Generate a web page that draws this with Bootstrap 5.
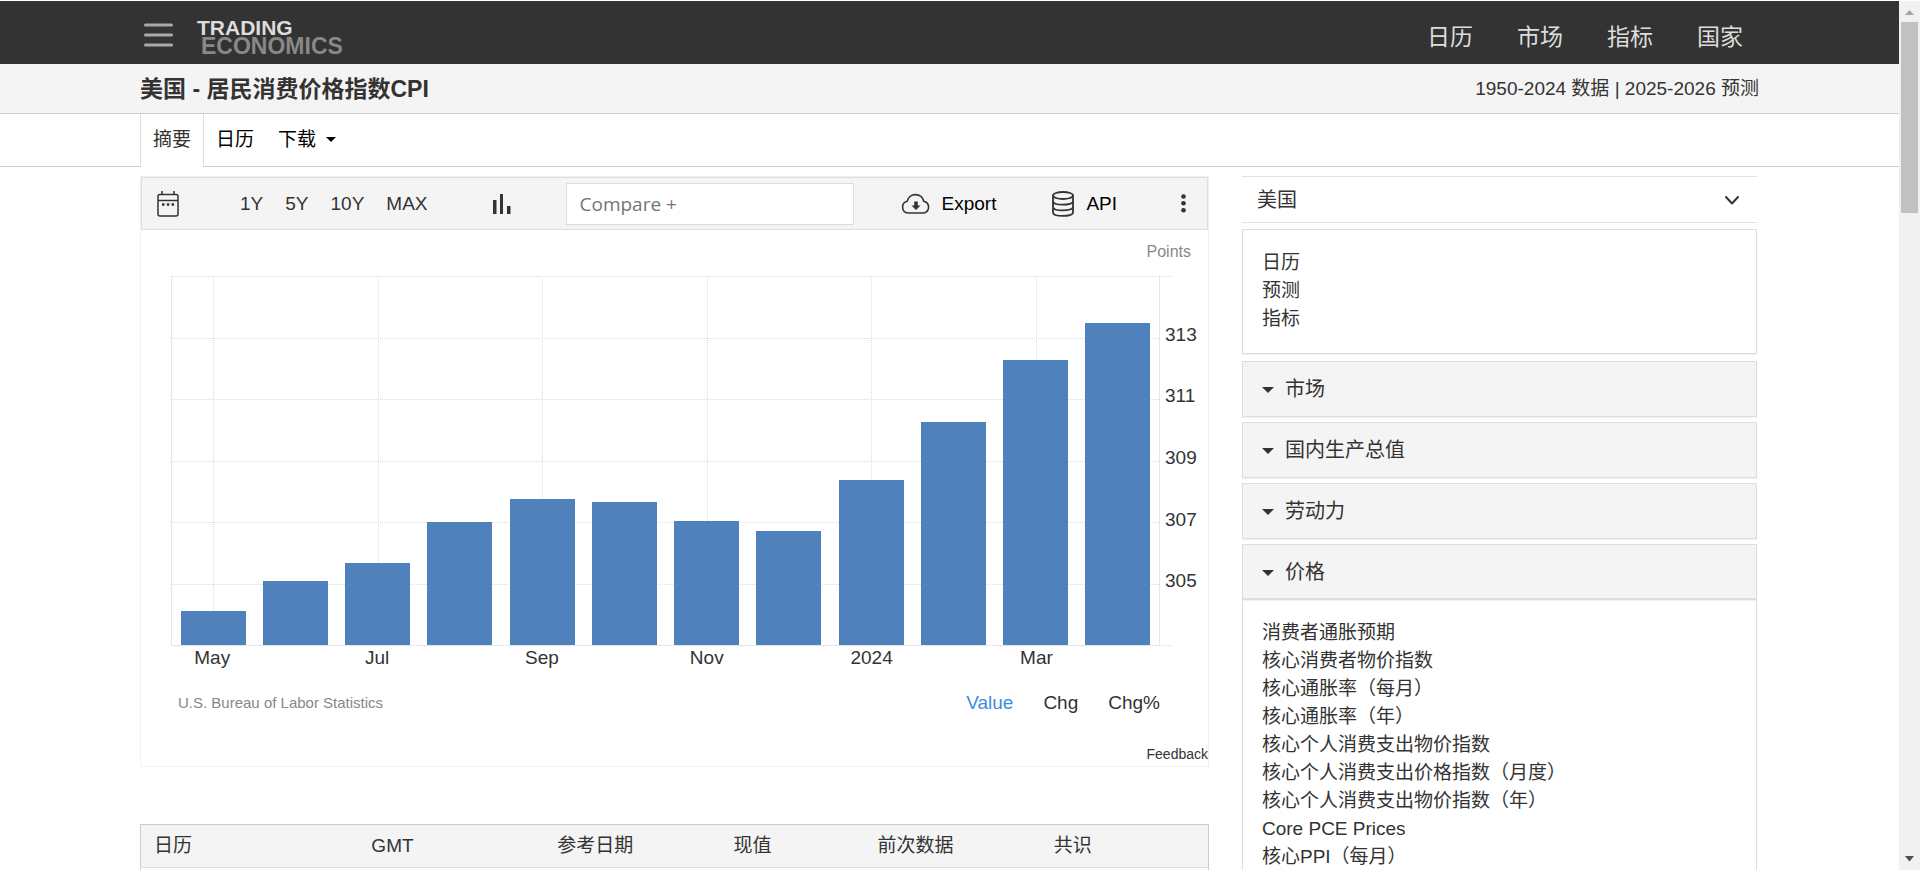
<!DOCTYPE html>
<html lang="zh-CN">
<head>
<meta charset="utf-8">
<meta name="viewport" content="width=device-width, initial-scale=1">
<title>美国 - 居民消费价格指数CPI</title>
<link href="https://cdn.jsdelivr.net/npm/bootstrap@5.3.0/dist/css/bootstrap.min.css" rel="stylesheet">
<style>
body{font-family:"Liberation Sans","Noto Sans CJK SC",sans-serif;font-size:19px;line-height:28px;color:#333;background:#fff}
a,.plain-btn{color:inherit;text-decoration:none}
.plain-btn{background:none;border:0;padding:0;line-height:28px;white-space:nowrap}
.page-view{padding:1px 21px 0 0}
.site-width{max-width:1647px;width:100%;margin:0 auto;padding:0 16px 0 14px}
.top-bar{background:#333;height:63px}
.logo-text{font-weight:700;padding-top:8px}
.logo-a,.logo-b{display:block;line-height:19px}
.logo-a{color:#ddd;font-size:21px}
.logo-b{color:#888;font-size:23px;padding-left:4px}
.main-links{gap:44px;font-size:23px;color:#ddd;padding:8px 14px 0 0}
.title-bar{background:#f4f4f4;border-bottom:1px solid #ccc;height:50px}
.title-bar h1{font-size:23px;font-weight:700;line-height:28px}
.title-bar .site-width{padding-right:14px}
.tab-bar{border-bottom:1px solid #ccc;height:53px}
.tab-bar .nav-link{height:53px;padding:12px 12px 0;color:#000}
.tab-bar .nav-link.active{border:solid #ddd;border-width:0 1px;color:#333;background:#fff}
.tri{display:inline-block;border:solid transparent;border-top-color:currentColor}
.tri-s{border-width:5px 5px 0;margin:0 0 4px 10px}
.tri-m{border-width:6px 6px 0;margin:0 11px 3px 0}
.cols{display:grid;grid-template-columns:1069fr 515fr;column-gap:33px;padding-top:9px}
.chart-card{border:1px solid #f1f1f1}
.chart-tools{background:#f4f4f4;border:1px solid #ddd;height:53px;padding-left:15px}
.range-set{gap:22px;margin-left:61px}
.type-btn{margin-left:65px}
.export-btn{margin-left:47px}
.export-btn svg{margin-right:11px}
.api-btn{margin-left:56px}
.api-btn svg{margin-right:12px}
.more-btn{margin-left:64px}
.compare-box{width:288px;height:42px;border:1px solid #ddd;border-radius:0;font:19px "Open Sans","Noto Sans",sans-serif;padding:0 13px;margin-left:55px}
.compare-box::placeholder{color:#757575;opacity:1}
.unit{font-size:16px;line-height:24px;color:#888;padding:10px 17px 12px 0}
.plot-row{padding-left:30px}
.plot{height:370px;position:relative;border:solid #e6e6e6;border-width:0 1px 1px}
.h-grid{position:absolute;inset:0}
.h-grid i{flex:1;border-top:1px dotted #ddd}
.slot{flex:1;position:relative;height:100%}
.slot.tick::before{content:"";position:absolute;left:50%;top:0;bottom:0;border-left:1px dotted #ddd}
.bar{width:79%;background:#4f81bc;position:relative}
.y-axis{width:48px;position:relative}
.y-axis::before,.y-axis::after{content:"";position:absolute;left:0;width:12px;height:1px;background:#eee}
.y-axis::before{top:0}
.y-axis::after{bottom:0}
.y-labels{padding:7px 0 0 5px;margin-bottom:-7px;height:377px;line-height:20px}
.y-labels span{flex:1;display:flex;align-items:flex-end}
.x-labels{margin-right:48px;line-height:24px}
.x-labels span{flex:1;text-align:center}
.source-row{padding:19px 48px 0 37px}
.source-row small{font-size:15px;color:#888}
.mode-set{gap:30px}
.mode-set .picked{color:#3b8ede}
.feedback{font-size:14px;line-height:24px;margin-top:25px}
.cal-table{margin-top:57px;border:1px solid #ccc;table-layout:fixed;color:#333}
.cal-table th{font-weight:400;background:#f4f4f4;border-bottom:1px solid #ddd;padding:7px 0 7px 13px;line-height:28px}
.country-box{border:solid #e2e2e2;border-width:1px 0;height:47px;position:relative}
.country-box select{appearance:none;background:none;border:0;width:100%;height:46px;font-size:20px;color:#333;padding:0 15px}
.country-box svg{position:absolute;right:18px;top:19px;pointer-events:none}
.side-box{border:1px solid #ddd;padding:19px 19px 20px;box-shadow:0 1px 1px rgba(0,0,0,.05)}
.side-box a{display:block}
.intro-box{margin:6px 0 7px}
.side-head{display:block;width:100%;height:56px;text-align:left;background:#f4f4f4;border:1px solid #ddd;padding:0 19px;font-size:20px;color:#333;margin-bottom:5px;box-shadow:0 1px 1px rgba(0,0,0,.05)}
.side-head.open{border-bottom-width:2px}
.scroll-rail{position:fixed;top:1px;right:0;bottom:0;width:21px;background:#f1f1f1;padding:0 2px}
.scroll-thumb{height:22%;background:#c1c1c1;width:17px}
</style>
</head>
<body>
<div class="page-view vh-100 overflow-hidden">
<header class="top-bar">
  <div class="site-width d-flex align-items-center h-100">
    <button class="plain-btn ms-1 pt-1 d-flex" aria-label="菜单"><svg width="29" height="24" stroke="#aaa" stroke-width="3" stroke-linecap="round"><path d="M1.500 2h26M1.500 12h26M1.500 22h26"/></svg></button>
    <a href="#" class="logo-text ms-4"><span class="logo-a">TRADING</span><span class="logo-b">ECONOMICS</span></a>
    <nav class="main-links d-flex ms-auto"><a href="#">日历</a><a href="#">市场</a><a href="#">指标</a><a href="#">国家</a></nav>
  </div>
</header>
<div class="title-bar">
  <div class="site-width d-flex align-items-center justify-content-between h-100">
    <h1 class="mb-0">美国 - 居民消费价格指数CPI</h1>
    <div>1950-2024 数据 | 2025-2026 预测</div>
  </div>
</div>
<div class="tab-bar">
  <div class="site-width">
    <ul class="nav">
      <li><a class="nav-link active" href="#">摘要</a></li>
      <li><a class="nav-link" href="#">日历</a></li>
      <li><a class="nav-link" href="#">下载<span class="tri tri-s"></span></a></li>
    </ul>
  </div>
</div>
<div class="site-width">
<div class="cols">
  <main>
    <section class="chart-card">
      <div class="chart-tools d-flex align-items-center">
        <button class="plain-btn d-flex" aria-label="日期"><svg width="22" height="26" fill="none" stroke="#333" stroke-width="1.500"><rect x="1" y="3.500" width="20" height="21.500" rx="2"/><path d="M1 9.500h20M5 0v4M17 0v4"/><path d="M5 13.500h2.500M9.800 13.500h2.500M14.600 13.500h2.500" stroke-width="2.500"/></svg></button>
        <div class="range-set d-flex"><button class="plain-btn">1Y</button><button class="plain-btn">5Y</button><button class="plain-btn">10Y</button><button class="plain-btn">MAX</button></div>
        <button class="plain-btn type-btn d-flex" aria-label="图表类型"><svg width="18" height="20" fill="#333"><path d="M0 6h3.500v14H0zM7 0h3v20H7zM14 12h3.500v8H14z"/></svg></button>
        <input class="compare-box" type="text" placeholder="Compare +" aria-label="Compare">
        <button class="plain-btn export-btn text-black d-flex align-items-center"><svg width="30" height="21" fill="none" stroke="#333" stroke-width="1.600"><path d="M7 20a6 6 0 0 1-.8-11.800A8.500 8.500 0 0 1 22.800 8.300 6 6 0 0 1 23 20z"/><path d="M13.200 8.500h3.600v4h2.700L15 17l-4.500-4.500h2.700z" fill="#333" stroke="none"/></svg>Export</button>
        <button class="plain-btn api-btn text-black d-flex align-items-center"><svg width="22" height="26" fill="none" stroke="#333" stroke-width="1.800"><ellipse cx="11" cy="4.500" rx="10" ry="3.500"/><path d="M1 4.500v17c0 4.600 20 4.600 20 0v-17M1 10.200c0 4.600 20 4.600 20 0M1 15.900c0 4.600 20 4.600 20 0"/></svg>API</button>
        <button class="plain-btn more-btn d-flex" aria-label="更多"><svg width="5" height="19" fill="#333"><circle cx="2.500" cy="2.500" r="2.300"/><circle cx="2.500" cy="9.300" r="2.300"/><circle cx="2.500" cy="16.200" r="2.300"/></svg></button>
      </div>
      <div class="unit text-end">Points</div>
      <div class="plot-row">
        <div class="d-flex">
          <div class="plot d-flex flex-fill">
            <div class="h-grid d-flex flex-column"><i></i><i></i><i></i><i></i><i></i><i></i></div>
            <div class="slot tick d-flex align-items-end justify-content-center"><div class="bar" style="height:9.2%"></div></div>
            <div class="slot d-flex align-items-end justify-content-center"><div class="bar" style="height:17.3%"></div></div>
            <div class="slot tick d-flex align-items-end justify-content-center"><div class="bar" style="height:22.2%"></div></div>
            <div class="slot d-flex align-items-end justify-content-center"><div class="bar" style="height:33.3%"></div></div>
            <div class="slot tick d-flex align-items-end justify-content-center"><div class="bar" style="height:39.7%"></div></div>
            <div class="slot d-flex align-items-end justify-content-center"><div class="bar" style="height:38.7%"></div></div>
            <div class="slot tick d-flex align-items-end justify-content-center"><div class="bar" style="height:33.5%"></div></div>
            <div class="slot d-flex align-items-end justify-content-center"><div class="bar" style="height:30.8%"></div></div>
            <div class="slot tick d-flex align-items-end justify-content-center"><div class="bar" style="height:44.7%"></div></div>
            <div class="slot d-flex align-items-end justify-content-center"><div class="bar" style="height:60.5%"></div></div>
            <div class="slot tick d-flex align-items-end justify-content-center"><div class="bar" style="height:77.2%"></div></div>
            <div class="slot d-flex align-items-end justify-content-center"><div class="bar" style="height:87.4%"></div></div>
          </div>
          <div class="y-axis"><div class="y-labels d-flex flex-column"><span>313</span><span>311</span><span>309</span><span>307</span><span>305</span><span></span></div></div>
        </div>
        <div class="x-labels d-flex"><span>May</span><span></span><span>Jul</span><span></span><span>Sep</span><span></span><span>Nov</span><span></span><span>2024</span><span></span><span>Mar</span><span></span></div>
      </div>
      <div class="source-row d-flex justify-content-between align-items-center">
        <small>U.S. Bureau of Labor Statistics</small>
        <div class="mode-set d-flex"><button class="plain-btn picked">Value</button><button class="plain-btn">Chg</button><button class="plain-btn">Chg%</button></div>
      </div>
      <div class="feedback text-end"><a href="#">Feedback</a></div>
    </section>
    <table class="cal-table w-100">
      <colgroup><col style="width:20.4%"><col style="width:17.4%"><col style="width:16.5%"><col style="width:13.5%"><col style="width:16.5%"><col></colgroup>
      <thead><tr><th>日历</th><th>GMT</th><th>参考日期</th><th>现值</th><th>前次数据</th><th>共识</th></tr></thead>
      <tbody><tr><td colspan="6">&nbsp;</td></tr></tbody>
    </table>
  </main>
  <aside>
    <div class="country-box"><select aria-label="国家"><option>美国</option></select><svg width="14" height="9" fill="none" stroke="#333" stroke-width="2" stroke-linecap="round" stroke-linejoin="round"><path d="M1 1l6 6.500L13 1"/></svg></div>
    <div class="side-box intro-box"><a href="#">日历</a><a href="#">预测</a><a href="#">指标</a></div>
    <button class="side-head"><span class="tri tri-m"></span>市场</button>
    <button class="side-head"><span class="tri tri-m"></span>国内生产总值</button>
    <button class="side-head"><span class="tri tri-m"></span>劳动力</button>
    <button class="side-head open mb-0"><span class="tri tri-m"></span>价格</button>
    <div class="side-box border-top-0">
      <a href="#">消费者通胀预期</a><a href="#">核心消费者物价指数</a><a href="#">核心通胀率（每月）</a><a href="#">核心通胀率（年）</a><a href="#">核心个人消费支出物价指数</a><a href="#">核心个人消费支出价格指数（月度）</a><a href="#">核心个人消费支出物价指数（年）</a><a href="#">Core PCE Prices</a><a href="#">核心PPI（每月）</a><a href="#">核心生产者物价指数</a>
    </div>
  </aside>
</div>
</div>
</div>
<div class="scroll-rail d-flex flex-column align-items-center" aria-hidden="true">
  <svg width="17" height="21" fill="#a3a3a3"><path d="M4 14l4.500-5L13 14z"/></svg>
  <div class="scroll-thumb"></div>
  <svg class="mt-auto" width="17" height="21" fill="#505050"><path d="M4 7l4.500 5.500L13 7z"/></svg>
</div>
<script src="https://cdn.jsdelivr.net/npm/bootstrap@5.3.0/dist/js/bootstrap.bundle.min.js"></script>
</body>
</html>
